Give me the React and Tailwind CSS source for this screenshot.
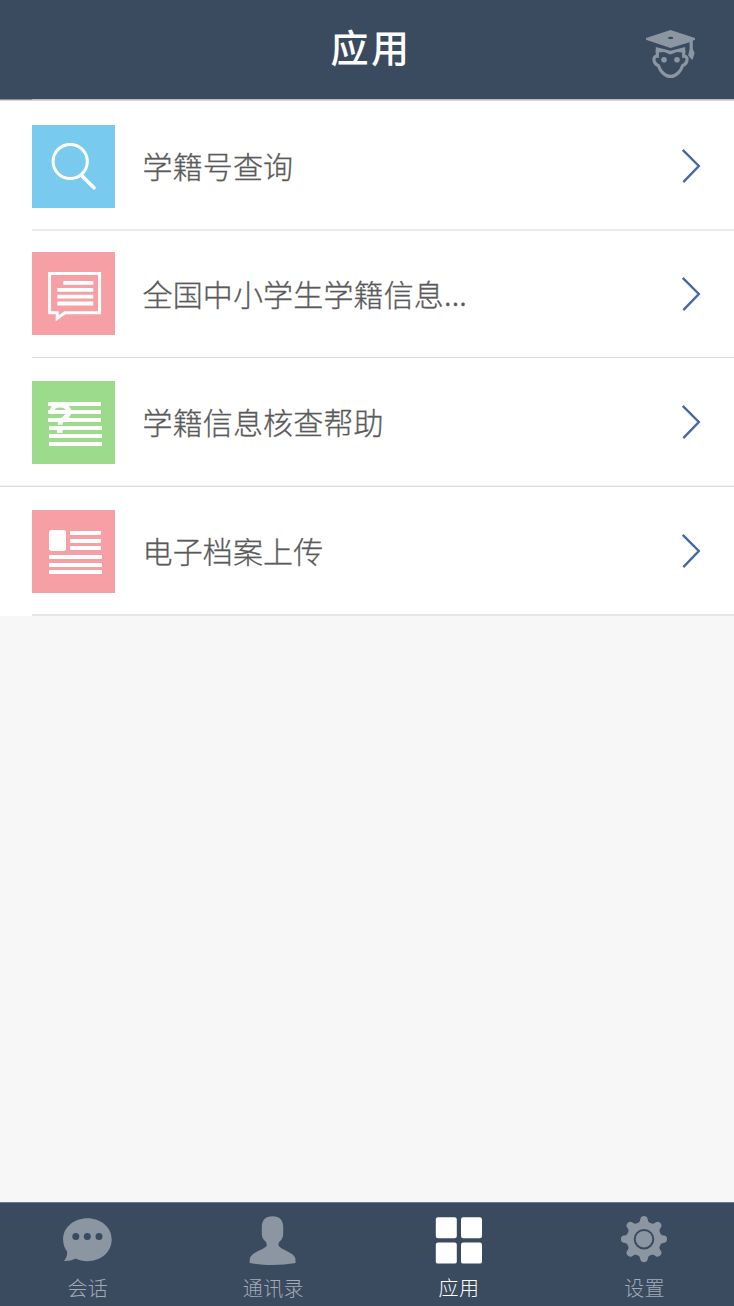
const apps = [
  { title: '学籍号查询', Icon: SearchIcon, tile: 'bg-[#78cbef]', row: 'h-[130px] pt-[24px]', line: 'ml-8 h-[2px] bg-[#ebebeb]' },
  { title: '全国中小学生学籍信息...', Icon: MessageIcon, tile: '-mt-[2px] bg-[#f6a0a5]', row: 'h-[127px] pt-[23px]', line: 'ml-8 h-px bg-[#dadada]' },
  { title: '学籍信息核查帮助', Icon: HelpIcon, tile: 'bg-[#9bdb8b]', row: 'h-[129px] pt-[23px]', line: 'h-[2px] border-t border-[#f3f3f3] bg-[#dcdcdc]' },
  { title: '电子档案上传', Icon: ArchiveIcon, tile: 'bg-[#f6a0a5]', row: 'h-[129px] pt-[23px]', line: 'ml-8 h-[2px] bg-[#e6e6e6]' },
];

const tabs = [
  { label: '会话', Icon: ChatIcon },
  { label: '通讯录', Icon: ContactIcon },
  { label: '应用', Icon: GridIcon, active: true },
  { label: '设置', Icon: GearIcon },
];

function SearchIcon() {
  return (
    <svg viewBox="0 0 83 83" className="size-[83px]" fill="none" stroke="#fff">
      <circle cx="38.2" cy="36.5" r="17.1" strokeWidth="3" />
      <path d="M49.5 50.5 62 62.7" strokeWidth="3.6" strokeLinecap="round" />
    </svg>
  );
}

function MessageIcon() {
  return (
    <svg viewBox="0 0 83 83" className="size-[83px]" fill="none" stroke="#fff" strokeWidth="3">
      <path d="M17.6 21.5H67.6V60.8H33L25.2 66.3V60.8H17.6Z" />
      <path d="M31.3 30.8H61.3M25.3 37.8H61.3M25.3 44.7H61.3M25.3 51.5H61.3" strokeWidth="3.8" />
    </svg>
  );
}

function HelpIcon() {
  return (
    <svg viewBox="0 0 83 83" className="size-[83px]" fill="#fff">
      {[21, 29, 37].map((y) => <rect key={y} x="16" y={y} width="53" height="4" rx="0.8" />)}
      {[45, 53, 61].map((y) => <rect key={y} x="17" y={y} width="53" height="4" rx="0.8" />)}
      <path d="M19.5 31.5C20 26 23.5 24.3 28 24.3C33 24.3 37 27 37 31C37 37 28 37 28 43.8" fill="none" stroke="#fff" strokeWidth="4.6" />
      <rect x="25" y="47" width="5.6" height="5" />
    </svg>
  );
}

function ArchiveIcon() {
  return (
    <svg viewBox="0 0 83 83" className="size-[83px]" fill="#fff">
      <rect x="17" y="20" width="17" height="21" rx="2.5" />
      {[21, 29, 36].map((y) => <rect key={y} x="38" y={y} width="31" height="4" rx="0.8" />)}
      {[45, 53, 60].map((y) => <rect key={y} x="17" y={y} width="53" height="4" rx="0.8" />)}
    </svg>
  );
}

function StudentIcon() {
  return (
    <svg viewBox="0 0 50 50" className="size-[50px]" fill="#8c96a2">
      <path fillRule="evenodd" d="M0 8 24.5 0 49 8V9.8L46.8 10.8V19L48.6 23 46.7 29.5H45.6L42.2 25.5 43.6 19V12.2L24.5 18 0 9.8ZM22 7.9A2.6 1.2 0 1 0 27.2 7.9A2.6 1.2 0 1 0 22 7.9Z" />
      <path d="M11.3 20V26.2C8.2 26 7.4 28.8 8.2 31.2C9 33.8 10.6 34.8 12.4 35.6C14.2 41.5 19.2 46.4 24.5 46.4C29.8 46.4 34.8 41.5 36.6 35.6C38.4 34.8 40 33.8 40.8 31.2C41.6 28.8 40.8 26 37.7 26.2V20" fill="none" stroke="#8c96a2" strokeWidth="3.2" />
      <path d="M9.8 17 24.5 20.8 39.2 17V22.8L31 22 24.5 24.5 18 22 9.8 22.8Z" />
      <circle cx="18" cy="29.8" r="2.8" />
      <circle cx="31" cy="29.8" r="2.8" />
    </svg>
  );
}

function ChatIcon() {
  return (
    <svg viewBox="0 0 50 50" className="size-[50px] -translate-x-px">
      <path d="M25.4 3.3C38.5 3.3 49.7 12 49.7 24.5C49.7 37.3 38.5 46.2 25.4 46.2C21.3 46.2 17.3 45.3 13.8 43.5C10 45.3 6.5 46.2 2 46C4.2 43.4 5.3 40.5 5.2 36.8C2.5 33.3 1.1 29 1.1 24.5C1.1 12 12.3 3.3 25.4 3.3Z" fill="#8c96a2" />
      <g fill="#3a4a5f">
        <circle cx="13.8" cy="21.5" r="3.5" />
        <circle cx="25.3" cy="21.5" r="3.5" />
        <circle cx="37" cy="21.5" r="3.5" />
      </g>
    </svg>
  );
}

function ContactIcon() {
  return (
    <svg viewBox="0 0 50 50" className="size-[50px]" fill="#8c96a2">
      <path d="M24.5 1.2C31.4 1.2 35.2 5 35.2 12V18.5C35.2 21.8 34.2 24.2 32.2 26C30.6 27.5 30.2 29 30.6 30.8C32.4 34.4 45.9 37.3 47.4 43.5L47.6 48C33.1 50.6 16.1 50.6 1.6 48L1.8 43.5C3.3 37.3 16.8 34.4 18.6 30.8C19 29 18.6 27.5 17 26C14.8 24.2 13.8 21.8 13.8 18.5V12C13.8 5 17.6 1.2 24.5 1.2Z" />
    </svg>
  );
}

function GridIcon() {
  return (
    <svg viewBox="0 0 50 50" className="size-[50px]" fill="#fff">
      <rect x="1.8" y="2.2" width="21" height="21" rx="2.2" />
      <rect x="27" y="2.2" width="21" height="21" rx="2.2" />
      <rect x="1.8" y="27.6" width="21" height="21" rx="2.2" />
      <rect x="27" y="27.6" width="21" height="21" rx="2.2" />
    </svg>
  );
}

function GearIcon() {
  return (
    <svg viewBox="0 0 50 50" className="size-[50px] -translate-x-px" fill="#8c96a2">
      <circle cx="25" cy="24.2" r="17.4" />
      {[0, 45, 90, 135, 180, 225, 270, 315].map((deg) => (
        <path key={deg} transform={`rotate(${deg} 25 24.2)`} d="M17 9.5C20.3 8.3 20.8 6.8 21.4 3.8C22 0.2 28 0.2 28.6 3.8C29.2 6.8 29.7 8.3 33 9.5Z" />
      ))}
      <circle cx="25" cy="24.2" r="9.3" fill="none" stroke="#3a4a5f" strokeWidth="2" />
    </svg>
  );
}

function Chevron() {
  return (
    <svg viewBox="0 0 20 36" className="mb-px h-9 w-5" fill="none" stroke="#4569a5" strokeWidth="2.4">
      <path d="M1.7 1.8 17.8 18 2.3 34.2" />
    </svg>
  );
}

export default function App() {
  return (
    <div className="flex h-[1306px] w-[734px] flex-col overflow-hidden bg-[#f7f7f7] font-['Noto_Sans_CJK_SC',sans-serif]">
      <header className="grid h-[99px] shrink-0 grid-cols-[1fr_auto_1fr] items-center bg-[#3a4a5f] pr-[38px]">
        <h1 className="col-start-2 mb-[7px] translate-x-[23px] text-[38px] leading-[90px] font-medium tracking-[2.5px] text-white">应用</h1>
        <div className="mt-[11px] justify-self-end">
          <StudentIcon />
        </div>
      </header>
      <div className="flex h-[2px] shrink-0 flex-col">
        <div className="flex h-px bg-[#b9bcc2]">
          <div className="w-8 bg-[#858e9a]" />
        </div>
        <div className="h-px bg-[#d9d9dc]" />
      </div>

      <ul className="bg-white">
        {apps.map(({ title, Icon, tile, row, line }) => (
          <li key={title} className={`flex flex-col justify-between ${row}`}>
            <div className="flex items-center pr-[33px] pl-8">
              <div className={`size-[83px] ${tile}`}>
                <Icon />
              </div>
              <span className="mb-[4px] ml-[27.5px] flex-1 text-[30px] leading-[44px] font-light tracking-[0.15px] text-[#5a5a5a] [-webkit-text-stroke:0.3px_#5a5a5a]">{title}</span>
              <Chevron />
            </div>
            <div className={line} />
          </li>
        ))}
      </ul>

      <nav className="mt-auto -ml-[5px] flex h-[104px] w-[745px] shrink-0 border-t border-[#707b89] bg-[#3a4a5f]">
        {tabs.map(({ label, Icon, active }) => (
          <div key={label} className="flex w-[185.6px] flex-col items-center pt-[12px]">
            <Icon />
            <span className={`mt-[8px] text-[20px] leading-[30px] font-light tracking-[0.4px] ${active ? 'text-white' : 'text-[#a3abb5]'}`}>{label}</span>
          </div>
        ))}
      </nav>
    </div>
  );
}
